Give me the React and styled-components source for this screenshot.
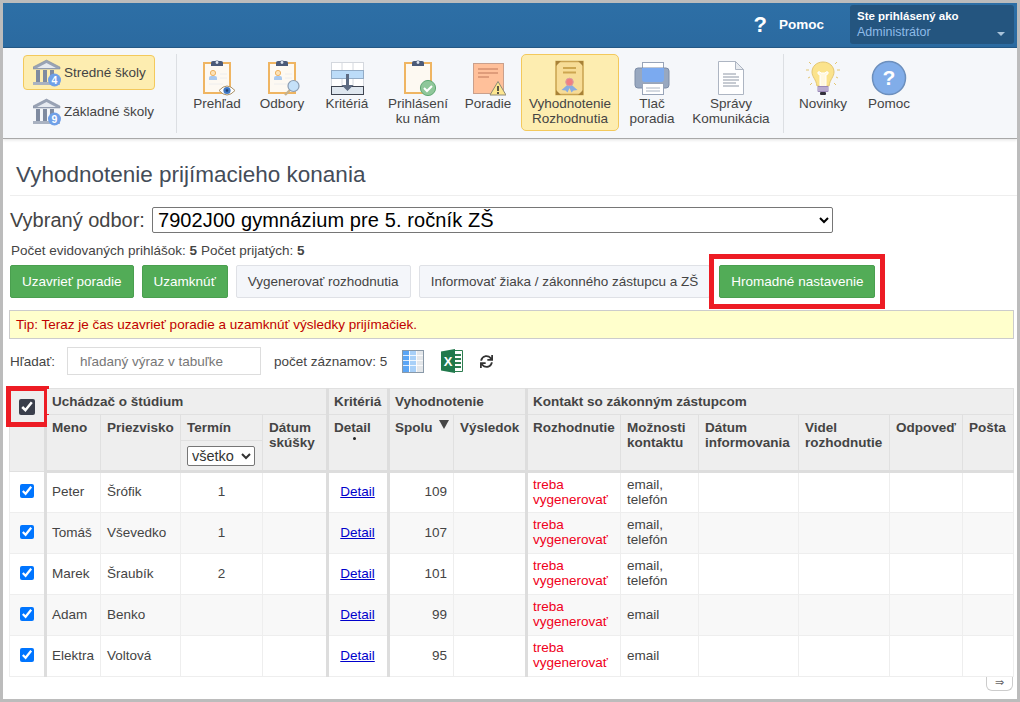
import React from "react";
import styled, { createGlobalStyle } from "styled-components";
import { FaSync } from "react-icons/fa";

const GlobalStyle = createGlobalStyle`
  html, body {
    margin: 0;
    background: #bcbcbc;
  }

  body {
    font-family: "Liberation Sans", Arial, sans-serif;
    font-size: 13.5px;
    color: #444;
  }
`;

const Frame = styled.div`
  display: flex;
  flex-direction: column;
  width: 1014px;
  height: 696px;
  margin: 3px;
  background: #fff;
  overflow: hidden;
`;

const TopBar = styled.header`
  display: flex;
  align-items: center;
  justify-content: flex-end;
  flex: none;
  box-sizing: border-box;
  height: 45px;
  padding: 2px 3px 3px 0;
  background: linear-gradient(#2d6fa6, #2b6aa0);
  border-bottom: 1px solid #255a88;
`;

const HelpMark = styled.span`
  margin-right: 12px;
  color: #fff;
  font-size: 22px;
  font-weight: 700;
`;

const HelpLabel = styled.span`
  margin-right: 26px;
  color: #fff;
  font-size: 13.5px;
  font-weight: 700;
`;

const UserBox = styled.div`
  position: relative;
  box-sizing: border-box;
  width: 164px;
  height: 39px;
  padding: 4px 7px;
  border-radius: 3px;
  background: #24557f;
`;

const UserCaption = styled.div`
  color: #fff;
  font-size: 11.5px;
  font-weight: 700;
  line-height: 15px;
`;

const UserName = styled.div`
  color: #8fbbe8;
  font-size: 12.5px;
  line-height: 16px;
`;

const UserCaret = styled.span`
  position: absolute;
  right: 9px;
  bottom: 8px;
  border: 4px solid transparent;
  border-top: 4px solid #a9c3da;
  border-bottom: 0;
`;

const Ribbon = styled.nav`
  display: flex;
  align-items: flex-start;
  flex: none;
  box-sizing: border-box;
  height: 91px;
  padding-top: 6px;
  background: #f5f7fa;
  border-bottom: 1px solid #a8a8a8;
  box-shadow: 0 1px 3px rgba(0, 0, 0, 0.12);
`;

const SchoolGroup = styled.div`
  display: flex;
  flex-direction: column;
  gap: 4px;
  width: 132px;
  margin: 1px 21px 0 20px;
`;

const SchoolButton = styled.div`
  display: flex;
  align-items: center;
  gap: 3px;
  box-sizing: border-box;
  height: 35px;
  padding-left: 9px;
  border: 1px solid ${(props) => (props.$active ? "#f3c95c" : "transparent")};
  border-radius: 4px;
  background: ${(props) => (props.$active ? "#fdedb0" : "transparent")};
  white-space: nowrap;
`;

const Separator = styled.div`
  flex: none;
  width: 1px;
  height: 79px;
  margin-right: ${(props) => props.$after}px;
  margin-left: ${(props) => props.$before}px;
  background: #dcdfe3;
`;

const RibbonItem = styled.div`
  display: flex;
  flex-direction: column;
  align-items: center;
  flex: none;
  box-sizing: border-box;
  width: ${(props) => props.$w}px;
  height: 77px;
  padding-top: 5px;
  border: 1px solid ${(props) => (props.$active ? "#f3c95c" : "transparent")};
  border-radius: 5px;
  background: ${(props) => (props.$active ? "#fdedb0" : "transparent")};
  line-height: 15px;
  text-align: center;
  white-space: nowrap;

  svg {
    flex: none;
  }
`;

const Main = styled.main`
  display: flex;
  flex-direction: column;
  flex: 1;
  padding: 0 3px 0 6px;
`;

const Title = styled.h1`
  margin: 0 -3px 0 1px;
  padding: 22px 0 7px 6px;
  border-bottom: 1px solid #eee;
  color: #444c58;
  font-size: 22.5px;
  font-weight: 400;
  line-height: 27px;
`;

const FieldRow = styled.div`
  display: flex;
  align-items: center;
  gap: 7px;
  margin: 11px 0 0 1px;
  font-size: 20px;
`;

const BigSelect = styled.select`
  width: 681px;
  height: 26px;
  padding: 0 1px;
  border: 1px solid #767676;
  border-radius: 2px;
  background: #fff;
  color: #000;
  font-family: inherit;
  font-size: 20px;
  letter-spacing: 0.1px;
`;

const CountLine = styled.div`
  margin: 10px 0 0 2px;
  line-height: 16px;
`;

const ButtonRow = styled.div`
  display: flex;
  gap: 8px;
  margin: 6px 0 0 1px;
`;

const Button = styled.button`
  box-sizing: border-box;
  height: 33px;
  padding: 0 11px;
  border: 1px solid ${(props) => (props.$green ? "#4a9f4f" : "#dfe1e6")};
  border-radius: 2px;
  background: ${(props) => (props.$green ? "#52ac57" : "#f4f6fa")};
  color: ${(props) => (props.$green ? "#fff" : "#444")};
  font-family: inherit;
  font-size: 13.5px;
  white-space: nowrap;
`;

const MarkedButton = styled(Button)`
  position: relative;
  margin-left: 1px;

  &::after {
    content: "";
    position: absolute;
    top: -12px;
    right: -11px;
    bottom: -12px;
    left: -11px;
    border: 5px solid #ed1c24;
  }
`;

const Tip = styled.div`
  box-sizing: border-box;
  height: 29px;
  margin-top: 12px;
  padding: 0 6px;
  border: 1px solid #ccc;
  background: #ffc;
  color: #c00000;
  line-height: 27px;
`;

const SearchRow = styled.div`
  display: flex;
  align-items: center;
  height: 28px;
  margin: 8px 0 0 1px;
`;

const SearchInput = styled.input`
  box-sizing: border-box;
  width: 194px;
  height: 28px;
  margin: 0 13px 0 12px;
  padding: 0 12px;
  border: 1px solid #ddd;
  font-family: inherit;
  font-size: 13.5px;

  &::placeholder {
    color: #777;
    opacity: 1;
  }
`;

const ToolIcon = styled.span`
  display: flex;
  margin-left: ${(props) => props.$left}px;
  color: #333;
`;

const Table = styled.table`
  width: 1004px;
  margin-top: 13px;
  border-collapse: collapse;
  table-layout: fixed;
`;

const HeadCell = styled.th`
  position: relative;
  box-sizing: border-box;
  height: ${(props) => props.$h || "auto"};
  padding: 5px 6px;
  padding-left: ${(props) => (props.$thick ? "5px" : "6px")};
  border: 1px solid #e0e0e0;
  border-left: ${(props) => (props.$thick ? "3px solid #ddd" : "1px solid #e0e0e0")};
  background: #eee;
  color: #444;
  font-size: 13.5px;
  font-weight: 700;
  line-height: 15px;
  text-align: left;
  vertical-align: top;
  white-space: ${(props) => (props.$wrap ? "normal" : "nowrap")};
`;

const CornerCell = styled(HeadCell)`
  padding: 10px 0 0 9px;
`;

const CheckFrame = styled.span`
  position: absolute;
  top: -3px;
  left: -4px;
  width: 33px;
  height: 31px;
  border: 5px solid #ed1c24;
`;

const SpanCell = styled(HeadCell)`
  border-bottom: 3px solid #ddd;
`;

const FilterCell = styled(HeadCell)`
  height: 31px;
  padding: 5px 6px 0;
  border-bottom: 3px solid #ddd;
`;

const FilterSelect = styled.select`
  display: block;
  width: 68px;
  height: 20px;
  padding: 0;
  border: 1px solid #767676;
  border-radius: 2px;
  background: #fff;
  color: #333;
  font-family: inherit;
  font-size: 14.5px;
`;

const Bullet = styled.span`
  display: block;
  width: 3px;
  height: 3px;
  margin: 2px 0 0 19px;
  border-radius: 50%;
  background: #222;
`;

const SortMark = styled.span`
  position: absolute;
  top: 5px;
  right: 4px;
  width: 0;
  height: 0;
  border: 5px solid transparent;
  border-top: 9px solid #444;
  border-bottom: 0;
`;

const Row = styled.tr`
  background: ${(props) => (props.$even ? "#f8f8f8" : "#fff")};
`;

const Cell = styled.td`
  box-sizing: border-box;
  height: 41px;
  padding: 0 6px 2px;
  padding-left: ${(props) => (props.$thick ? "5px" : "6px")};
  border: 1px solid #eee;
  border-left: ${(props) => (props.$thick ? "3px solid #ddd" : "1px solid #eee")};
  color: ${(props) => (props.$red ? "#f00020" : "#444")};
  font-size: 13.5px;
  line-height: 15px;
  text-align: ${(props) => props.$align || "left"};
`;

const RowCheck = styled.input`
  display: block;
  width: 14px;
  height: 14px;
  margin: 0 0 0 4px;
  accent-color: #0075ff;
`;

const MasterCheck = styled.input`
  display: block;
  width: 16px;
  height: 16px;
  margin: 0;
  accent-color: #3a3f4b;
`;

const DetailLink = styled.a`
  color: #00c;
  text-decoration: underline;
`;

const ScrollRow = styled.div`
  display: flex;
  justify-content: flex-end;
  width: 1004px;
`;

const ScrollTab = styled.div`
  box-sizing: border-box;
  width: 27px;
  height: 14px;
  border: 1px solid #ccc;
  border-top: 0;
  border-radius: 0 0 6px 6px;
  color: #666;
  font-family: "DejaVu Sans", sans-serif;
  font-size: 11px;
  line-height: 12px;
  text-align: center;
`;

function Board({ children }) {
  return (
    <>
      <rect x="5" y="3" width="26" height="30" fill="#fdf9f2" stroke="#efb562" strokeWidth="2" />
      <path d="M12 6V3q0-2 2-2h2q2-1 4 0h2q2 0 2 2v3z" fill="#4b5a78" />
      <circle cx="18" cy="2.500" r="1.400" fill="#dfe6f0" />
      {children}
    </>
  );
}

function Person() {
  return (
    <>
      <circle cx="14" cy="13" r="2.600" fill="#fde3b8" stroke="#eeb260" />
      <path d="M10 20v-2q0-2 2-2h4q2 0 2 2v2z" fill="#a9c9ef" />
      <path d="M21 14h7M21 18h7M10 24h14" stroke="#eeeeee" />
    </>
  );
}

function OverviewIcon() {
  return (
    <svg width="36" height="36" viewBox="0 0 36 36">
      <Board>
        <Person />
      </Board>
      <path d="M20 30.500q8-9 16 0q-8 9-16 0z" fill="#fff" stroke="#a99066" />
      <circle cx="28" cy="30.500" r="3.600" fill="#3f78c4" />
      <circle cx="28" cy="30.500" r="1.300" fill="#24406e" />
    </svg>
  );
}

function BranchesIcon() {
  return (
    <svg width="36" height="36" viewBox="0 0 36 36">
      <Board>
        <Person />
      </Board>
      <path d="M26 30l-5 5" stroke="#c7b28c" strokeWidth="2.400" />
      <circle cx="29.500" cy="26" r="5.500" fill="#c5e1f9" stroke="#8b9db2" strokeWidth="1.200" />
    </svg>
  );
}

function CriteriaIcon() {
  return (
    <svg width="36" height="36" viewBox="0 0 36 36">
      <rect x="2.500" y="2.500" width="32" height="32" fill="#fff" stroke="#d4d8de" />
      <path d="M13 2v33M24 2v33" stroke="#d4d8de" />
      <rect x="2.500" y="10.500" width="32" height="8" fill="#bcdcf8" stroke="#93acc6" />
      <rect x="2.500" y="26.500" width="32" height="8" fill="#dfe7ef" stroke="#3e4450" />
      <path d="M17 14h3v11h4.500l-6 6-6-6H17z" fill="#5d6b82" />
    </svg>
  );
}

function ApplicantsIcon() {
  return (
    <svg width="36" height="36" viewBox="0 0 36 36">
      <Board />
      <circle cx="28" cy="28" r="7.600" fill="#8fc79a" stroke="#5fa873" />
      <path d="M24 28l3 3 5-5" fill="none" stroke="#fff" strokeWidth="2" />
    </svg>
  );
}

function RankingIcon() {
  return (
    <svg width="36" height="36" viewBox="0 0 36 36">
      <rect x="3.500" y="3.500" width="30" height="30" fill="#ffc09a" stroke="#c9a08c" />
      <path d="M8 9h20M8 13h20M8 17h11" stroke="#c0785a" />
      <path d="M28 21.500l8 13.500H20z" fill="#fde68f" stroke="#8d8a78" />
      <path d="M28 26v5M28 32v2" stroke="#333" strokeWidth="1.600" />
    </svg>
  );
}

function CertificateIcon() {
  return (
    <svg width="36" height="36" viewBox="0 0 36 36">
      <rect x="4" y="1.500" width="27" height="33" fill="#f7dc96" stroke="#c9a24f" strokeWidth="1.500" />
      <path d="M4 1h5l-5 5zM31 1h-5l5 5zM4 35h5l-5-5zM31 35h-5l5-5z" fill="#a88238" />
      <path d="M11 7h13v2H11zM11 11.500h13v2H11z" fill="#cda650" />
      <path d="M17.500 23l-8 7 4 .5 2 2 2-4.500 2 4.500 2-2 4-.5z" fill="#89acdf" />
      <circle cx="17.500" cy="22" r="3.800" fill="#ef7f83" stroke="#d9a0a0" />
    </svg>
  );
}

function PrinterIcon() {
  return (
    <svg width="36" height="36" viewBox="0 0 36 36">
      <rect x="8.500" y="2.500" width="21" height="10" fill="#fff" stroke="#98a4b8" />
      <rect x="1" y="8" width="34" height="20" rx="3" fill="#98a8c0" stroke="#7c8ca6" />
      <path d="M8 8h22v11q0 3-3 3H11q-3 0-3-3z" fill="#7baaf0" />
      <rect x="8.500" y="23.500" width="21" height="11" fill="#fff" stroke="#98a4b8" />
      <path d="M12 28h14M12 31h14" stroke="#aab4c2" />
    </svg>
  );
}

function DocumentIcon() {
  return (
    <svg width="36" height="36" viewBox="0 0 36 36">
      <path d="M5.500 1.500h17l8 8v25h-25z" fill="#fff" stroke="#adb5c2" />
      <path d="M22.500 1.500v8h8z" fill="#e9ecf0" stroke="#adb5c2" />
      <path d="M10 14h13M10 17h16M10 20h16M10 23h13M10 26h16" stroke="#8e97a5" />
    </svg>
  );
}

function BulbIcon() {
  return (
    <svg width="36" height="36" viewBox="0 0 36 36">
      <path d="M18 2c-6.500 0-11 4.500-11 10 0 5 4 7 5 14h12c1-7 5-9 5-14 0-5.500-4.500-10-11-10z" fill="#fbe38c" stroke="#e3c672" />
      <path d="M15 26V15q-3-1-2-3 2-1 3 1h4q1-2 3-1 1 2-2 3v11" fill="#fff8e0" stroke="#fff" />
      <rect x="12.500" y="26" width="11" height="6" rx="1" fill="#9a88b8" />
      <path d="M13 28h10M13 30h10" stroke="#d7cfe6" />
      <rect x="15" y="32" width="6" height="3" rx="1" fill="#33303c" />
      <path d="M1 10h3M32 10h3M4 2l2 2M32 2l-2 2M3 18l2-1M33 18l-2-1M5 25l2-2M31 25l-2-2" stroke="#e3c672" />
    </svg>
  );
}

function HelpIcon() {
  return (
    <svg width="36" height="36" viewBox="0 0 36 36">
      <circle cx="18" cy="18" r="16.500" fill="#81ade9" stroke="#6c8fbd" strokeWidth="1.500" />
      <text x="18" y="25" fill="#fff" fontFamily="Liberation Sans" fontSize="21" fontWeight="700" textAnchor="middle">
        ?
      </text>
    </svg>
  );
}

function BankIcon({ count }) {
  return (
    <svg width="28" height="28" viewBox="0 0 28 28">
      <path d="M13.500 1L27 8v2H0V8z" fill="#99a3b5" stroke="#7b8699" strokeWidth="0.500" />
      <path d="M4 9l9.500-5L23 9z" fill="#e6eaf0" />
      <path d="M3 11h4v12H3zM10 11h4v12h-4zM17 11h4v12h-4z" fill="#7f8ba0" />
      <path d="M0 23h27v3H0z" fill="#a9b2c1" />
      <circle cx="21.500" cy="21" r="6.500" fill="#6fa0e8" />
      <text x="21.500" y="25" fill="#fff" fontFamily="Liberation Sans" fontSize="10.500" fontWeight="700" textAnchor="middle">
        {count}
      </text>
    </svg>
  );
}

function ColumnsIcon() {
  return (
    <svg width="22" height="23" viewBox="0 0 22 23">
      <rect x="0.500" y="0.500" width="21" height="22" fill="#e4e7ea" stroke="#8a99a8" />
      <rect x="1" y="1" width="6" height="21" fill="#5aa5f5" />
      <rect x="8" y="1" width="6" height="21" fill="#a8d0f8" />
      <path d="M1 5.500h20M1 10.500h20M1 15.500h20M7.500 1v21M14.500 1v21" stroke="#fff" strokeOpacity="0.800" />
    </svg>
  );
}

function ExcelIcon() {
  return (
    <svg width="22" height="24" viewBox="0 0 22 24">
      <path d="M12 1.500h9.500v21H12z" fill="#fff" stroke="#2e7d50" />
      <path d="M14 6h6M14 10h6M14 14h6M14 18h6" stroke="#2e7d50" strokeWidth="2" />
      <path d="M0 2.500L14 0v24L0 21.500z" fill="#21794c" />
      <text x="7" y="17" fill="#fff" fontFamily="Liberation Sans" fontSize="13" fontWeight="700" textAnchor="middle">
        X
      </text>
    </svg>
  );
}

const menuItems = [
  { w: 68, icon: <OverviewIcon />, lines: ["Prehľad"] },
  { w: 62, icon: <BranchesIcon />, lines: ["Odbory"] },
  { w: 68, icon: <CriteriaIcon />, lines: ["Kritériá"] },
  { w: 74, icon: <ApplicantsIcon />, lines: ["Prihlásení", "ku nám"] },
  { w: 66, icon: <RankingIcon />, lines: ["Poradie"] },
  { w: 98, icon: <CertificateIcon />, lines: ["Vyhodnotenie", "Rozhodnutia"], active: true },
  { w: 66, icon: <PrinterIcon />, lines: ["Tlač", "poradia"] },
  { w: 92, icon: <DocumentIcon />, lines: ["Správy", "Komunikácia"] },
];

const extraItems = [
  { w: 66, icon: <BulbIcon />, lines: ["Novinky"] },
  { w: 66, icon: <HelpIcon />, lines: ["Pomoc"] },
];

const columnWidths = [36, 55, 80, 82, 65, 61, 65, 73, 94, 78, 100, 91, 73, 51];

const students = [
  { first: "Peter", last: "Šrófik", term: "1", total: 109, contact: ["email,", "telefón"] },
  { first: "Tomáš", last: "Vševedko", term: "1", total: 107, contact: ["email,", "telefón"] },
  { first: "Marek", last: "Šraubík", term: "2", total: 101, contact: ["email,", "telefón"] },
  { first: "Adam", last: "Benko", term: "", total: 99, contact: ["email"] },
  { first: "Elektra", last: "Voltová", term: "", total: 95, contact: ["email"] },
];

function Lines({ lines }) {
  return lines.map((line, i) => (
    <React.Fragment key={line}>
      {i > 0 && <br />}
      {line}
    </React.Fragment>
  ));
}

function MenuEntry({ item }) {
  return (
    <RibbonItem $w={item.w} $active={item.active}>
      {item.icon}
      <div>
        <Lines lines={item.lines} />
      </div>
    </RibbonItem>
  );
}

export default function App() {
  return (
    <>
      <GlobalStyle />
      <Frame>
        <TopBar>
          <HelpMark>?</HelpMark>
          <HelpLabel>Pomoc</HelpLabel>
          <UserBox>
            <UserCaption>Ste prihlásený ako</UserCaption>
            <UserName>Administrátor</UserName>
            <UserCaret />
          </UserBox>
        </TopBar>

        <Ribbon>
          <SchoolGroup>
            <SchoolButton $active>
              <BankIcon count="4" />
              Stredné školy
            </SchoolButton>
            <SchoolButton>
              <BankIcon count="9" />
              Základné školy
            </SchoolButton>
          </SchoolGroup>
          <Separator $before={0} $after={6} />
          {menuItems.map((item) => (
            <MenuEntry key={item.lines[0]} item={item} />
          ))}
          <Separator $before={6} $after={6} />
          {extraItems.map((item) => (
            <MenuEntry key={item.lines[0]} item={item} />
          ))}
        </Ribbon>

        <Main>
          <Title>Vyhodnotenie prijímacieho konania</Title>

          <FieldRow>
            Vybraný odbor:
            <BigSelect defaultValue="7902J00">
              <option value="7902J00">7902J00 gymnázium pre 5. ročník ZŠ</option>
            </BigSelect>
          </FieldRow>

          <CountLine>
            Počet evidovaných prihlášok: <b>5</b> Počet prijatých: <b>5</b>
          </CountLine>

          <ButtonRow>
            <Button $green>Uzavrieť poradie</Button>
            <Button $green>Uzamknúť</Button>
            <Button>Vygenerovať rozhodnutia</Button>
            <Button>Informovať žiaka / zákonného zástupcu a ZŠ</Button>
            <MarkedButton $green>Hromadné nastavenie</MarkedButton>
          </ButtonRow>

          <Tip>Tip: Teraz je čas uzavrieť poradie a uzamknúť výsledky prijímačiek.</Tip>

          <SearchRow>
            Hľadať:
            <SearchInput placeholder="hľadaný výraz v tabuľke" />
            počet záznamov: 5
            <ToolIcon $left={15}>
              <ColumnsIcon />
            </ToolIcon>
            <ToolIcon $left={17}>
              <ExcelIcon />
            </ToolIcon>
            <ToolIcon $left={17}>
              <FaSync size={13} />
            </ToolIcon>
          </SearchRow>

          <Table>
            <colgroup>
              {columnWidths.map((width, i) => (
                <col key={i} width={width} />
              ))}
            </colgroup>
            <thead>
              <tr>
                <CornerCell rowSpan={3}>
                  <MasterCheck type="checkbox" defaultChecked />
                  <CheckFrame />
                </CornerCell>
                <HeadCell $thick $h="26px" colSpan={4}>
                  Uchádzač o štúdium
                </HeadCell>
                <HeadCell $thick>Kritériá</HeadCell>
                <HeadCell $thick colSpan={2}>
                  Vyhodnotenie
                </HeadCell>
                <HeadCell $thick colSpan={6}>
                  Kontakt so zákonným zástupcom
                </HeadCell>
              </tr>
              <tr>
                <SpanCell $thick rowSpan={2}>
                  Meno
                </SpanCell>
                <SpanCell rowSpan={2}>Priezvisko</SpanCell>
                <HeadCell $h="26px">Termín</HeadCell>
                <SpanCell $wrap rowSpan={2}>
                  Dátum skúšky
                </SpanCell>
                <SpanCell $thick rowSpan={2}>
                  Detail
                  <Bullet />
                </SpanCell>
                <SpanCell $thick rowSpan={2}>
                  Spolu
                  <SortMark />
                </SpanCell>
                <SpanCell rowSpan={2}>Výsledok</SpanCell>
                <SpanCell $thick rowSpan={2}>
                  Rozhodnutie
                </SpanCell>
                <SpanCell $wrap rowSpan={2}>
                  Možnosti kontaktu
                </SpanCell>
                <SpanCell $wrap rowSpan={2}>
                  Dátum informovania
                </SpanCell>
                <SpanCell $wrap rowSpan={2}>
                  Videl rozhodnutie
                </SpanCell>
                <SpanCell rowSpan={2}>Odpoveď</SpanCell>
                <SpanCell rowSpan={2}>Pošta</SpanCell>
              </tr>
              <tr>
                <FilterCell>
                  <FilterSelect defaultValue="all">
                    <option value="all">všetko</option>
                  </FilterSelect>
                </FilterCell>
              </tr>
            </thead>
            <tbody>
              {students.map((student, i) => (
                <Row key={student.last} $even={i % 2 === 1}>
                  <Cell>
                    <RowCheck type="checkbox" defaultChecked />
                  </Cell>
                  <Cell $thick>{student.first}</Cell>
                  <Cell>{student.last}</Cell>
                  <Cell $align="center">{student.term}</Cell>
                  <Cell />
                  <Cell $thick $align="center">
                    <DetailLink href="#detail">Detail</DetailLink>
                  </Cell>
                  <Cell $thick $align="right">
                    {student.total}
                  </Cell>
                  <Cell />
                  <Cell $thick $red>
                    treba vygenerovať
                  </Cell>
                  <Cell>
                    <Lines lines={student.contact} />
                  </Cell>
                  <Cell />
                  <Cell />
                  <Cell />
                  <Cell />
                </Row>
              ))}
            </tbody>
          </Table>

          <ScrollRow>
            <ScrollTab>⇒</ScrollTab>
          </ScrollRow>
        </Main>
      </Frame>
    </>
  );
}
